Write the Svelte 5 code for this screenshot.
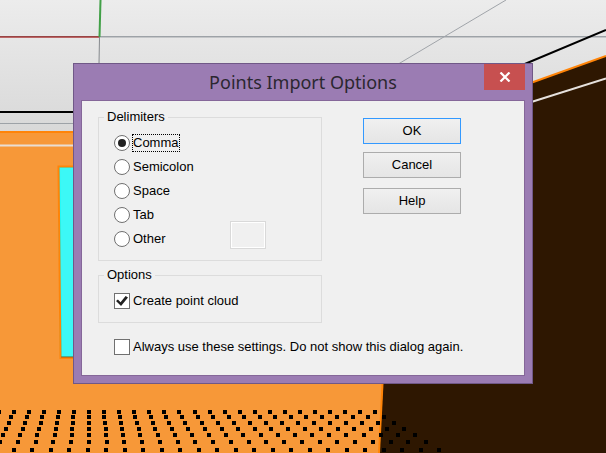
<script>
  const delimiters = ['Comma', 'Semicolon', 'Space', 'Tab', 'Other'];
  let delimiter = $state('Comma');
  let createCloud = $state(true);
  let always = $state(false);
  let custom = $state('');

  // Rows of the point cloud: top edge, first and last point centre, intervals between them
  const rows = [
    { y: 410, from: -1, to: 375, n: 25 },
    { y: 415, from: 11, to: 384, n: 24 },
    { y: 421, from: 9, to: 394, n: 24 },
    { y: 427, from: 6, to: 404, n: 24 },
    { y: 433, from: 3, to: 415, n: 24 },
    { y: 440, from: 0, to: 426, n: 24 },
    { y: 448, from: 14, to: 439, n: 23 }
  ];
  const points = rows.flatMap((r) =>
    Array.from({ length: r.n + 1 }, (_, i) => ({
      x: Math.round(r.from + ((r.to - r.from) * i) / r.n) - 2,
      y: r.y
    }))
  );
</script>

<main class="viewport">
  <svg class="scene" viewBox="0 0 606 453" preserveAspectRatio="xMinYMin slice" aria-hidden="true">
    <defs>
      <linearGradient id="sky" x1="0" y1="0" x2="0" y2="1">
        <stop offset="0" stop-color="#ececec" />
        <stop offset="1" stop-color="#d7d7d7" />
      </linearGradient>
    </defs>
    <rect width="606" height="140" fill="url(#sky)" />
    <path d="M100 37.5H606" stroke="#c4c6c8" />
    <path d="M100 36.5H606" stroke="#9da2a7" />
    <path d="M0 36.5H100" stroke="#984444" />
    <path d="M0 37.5H100" stroke="#b66" />
    <path d="M99.5 37L99 64" stroke="#85898d" />
    <path d="M100.5 0L99.5 37" stroke="#41a047" stroke-width="2" />
    <path d="M506 0L400 63L380 75" stroke="#a0a4a9" fill="none" />
    <path d="M0 123.5H80" stroke="#9da2a7" />
    <path d="M0 112H80M520 66L606 30" stroke="#000" stroke-width="2" />
    <path d="M0 132H532L380 453H0Z" fill="#f79838" />
    <path d="M0 132H80" stroke="#ff8408" stroke-width="2" />
    <path d="M0 145.5H80" stroke="#e9ded3" stroke-width="2" />
    <path d="M383.500 370L379.500 453H606V56L525 85V370Z" fill="#2e1701" />
    <path d="M606 56L525 85" stroke="#ff8408" stroke-width="2" />
    <path d="M606 78.5L525 104" stroke="#e6e1dd" stroke-width="2" />
    <path d="M382.5 384L379 453" stroke="#ff8408" stroke-width="2" />
    <path d="M59 167H80V357H61Z" fill="#3cf8f6" stroke="#00fcff" stroke-width="2" />
    <path d="M80 166.500H58.500L60.500 358H80" fill="none" stroke="#ff8408" stroke-width="2" />
    <path d="M61 357H80" stroke="#9c5a14" />
    {#each points as p}
      <rect x={p.x} y={p.y} width="4" height="4" shape-rendering="crispEdges" />
    {/each}
  </svg>

  <div class="dialog" role="dialog" aria-labelledby="title">
    <header>
      <h1 id="title">Points Import Options</h1>
      <button class="close" type="button" aria-label="Close">
        <svg width="12" height="10" viewBox="0 0 12 10"><path d="M1.500 .5L10.500 9.500M10.500 .5L1.500 9.500" stroke="#fff" stroke-width="2.200" /></svg>
      </button>
    </header>
    <form onsubmit={(e) => e.preventDefault()}>
      <div class="columns">
        <div class="groups">
          <fieldset class="delims">
            <legend>Delimiters</legend>
            <div class="pair">
              <div class="list">
                {#each delimiters as d}
                  <label class="choice">
                    <input type="radio" name="delimiter" value={d} bind:group={delimiter} />
                    <span class:focus={d === 'Comma'}>{d}</span>
                  </label>
                {/each}
              </div>
              <input class="custom" type="text" maxlength="1" aria-label="Other delimiter" disabled={delimiter !== 'Other'} bind:value={custom} />
            </div>
          </fieldset>
          <fieldset class="options">
            <legend>Options</legend>
            <label class="choice">
              <input type="checkbox" bind:checked={createCloud} />
              <span>Create point cloud</span>
            </label>
          </fieldset>
        </div>
        <div class="actions">
          <button class="default" type="submit">OK</button>
          <button type="button">Cancel</button>
          <button class="help" type="button">Help</button>
        </div>
      </div>
      <label class="choice always">
        <input type="checkbox" bind:checked={always} />
        <span>Always use these settings. Do not show this dialog again.</span>
      </label>
    </form>
  </div>
</main>

<style>
  .viewport {
    position: relative;
    min-height: 100vh;
    overflow: hidden;
    font: 13px/16px "Liberation Sans", Arial, sans-serif;
    color: #000;
  }
  .scene {
    position: absolute;
    inset: 0;
    width: 100%;
    height: 100%;
  }
  .dialog {
    position: absolute;
    left: 73px;
    top: 63px;
    width: 460px;
    box-sizing: border-box;
    border: 1px solid #705887;
    background: #9b7cb3;
    padding: 0 7px 7px;
  }
  header {
    display: flex;
    height: 36px;
    align-items: flex-start;
  }
  h1 {
    flex: 1;
    margin: 0;
    padding-left: 41px;
    font: 400 18px/36px "Noto Sans", sans-serif;
    text-align: center;
    color: #2b2730;
  }
  .close {
    width: 41px;
    height: 26px;
    padding: 0;
    border: 0;
    background: #c75050;
    display: flex;
    align-items: center;
    justify-content: center;
  }
  form {
    border: 1px solid #856799;
    background: #f0f0f0;
    padding: 8px 16px 16px;
  }
  .columns {
    display: flex;
  }
  .groups {
    flex: 0 0 224px;
  }
  fieldset {
    margin: 0;
    min-width: 0;
    border: 1px solid #dcdcdc;
    padding: 6px 0 9px 15px;
  }
  legend {
    margin-left: -10px;
    padding: 0 3px;
  }
  .options {
    margin-top: 6px;
  }
  .pair {
    display: flex;
    align-items: flex-end;
  }
  .list {
    width: 116px;
  }
  .choice {
    display: flex;
    align-items: center;
    gap: 2px;
    height: 24px;
  }
  .choice span {
    border: 1px solid transparent;
  }
  .choice span.focus {
    border: 1px dotted #000;
  }
  .choice input {
    appearance: none;
    flex: none;
    width: 16px;
    height: 16px;
    margin: 0;
    border: 1px solid #707070;
    background: #fff;
    display: grid;
    place-items: center;
  }
  .choice input[type="radio"] {
    border-radius: 50%;
  }
  .choice input[type="radio"]:checked::before {
    content: "";
    width: 8px;
    height: 8px;
    border-radius: 50%;
    background: #212121;
  }
  .choice input[type="checkbox"]:checked::before {
    content: "";
    width: 12px;
    height: 10px;
    background: #212121;
    clip-path: polygon(0 50%, 16% 36%, 38% 62%, 80% 0, 100% 16%, 42% 100%);
  }
  .custom {
    box-sizing: border-box;
    width: 36px;
    height: 28px;
    margin: 0 0 2px;
    border: 1px solid #d9d9d9;
    background: #f0f0f0;
    box-shadow: inset 0 0 0 1px #fff;
    text-align: center;
  }
  .actions {
    display: flex;
    flex-direction: column;
    gap: 8px;
    margin-left: 41px;
    padding-top: 9px;
  }
  .actions button {
    width: 98px;
    height: 26px;
    padding: 0;
    border: 1px solid #acacac;
    background: linear-gradient(#f0f0f0, #e5e5e5);
    font: inherit;
    color: #000;
  }
  .actions .default {
    border-color: #3399ff;
  }
  .actions .help {
    margin-top: 2px;
  }
  .always {
    margin: 12px 0 0 16px;
  }
</style>
